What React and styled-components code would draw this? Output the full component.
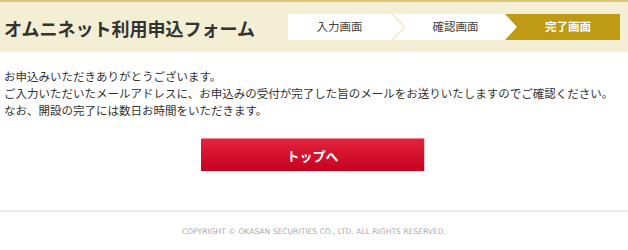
import React from "react";
import styled, { createGlobalStyle } from "styled-components";

const GlobalStyle = createGlobalStyle`
  html, body {
    margin: 0;
    padding: 0;
    background: #fff;
  }
  body {
    font-family: "Noto Sans CJK JP", "Noto Sans", sans-serif;
    color: #333;
  }
`;

const Page = styled.div`
  width: 628px;
  height: 250px;
  overflow: hidden;
  display: flex;
  flex-direction: column;
`;

const Header = styled.header`
  height: 50px;
  border-top: 2px solid #dcc677;
  background: #f4eed4;
  display: flex;
  align-items: center;
  padding: 0 8px 0 4px;
`;

const Title = styled.h1`
  margin: 0;
  font-size: 18px;
  font-weight: bold;
  letter-spacing: 0;
  color: #333;
  line-height: 1;
  padding-top: 1px;
`;

const Steps = styled.ol`
  margin: 0 0 0 auto;
  padding: 0;
  list-style: none;
  display: flex;
  width: 332px;
  height: 26px;
`;

const arrow = 12;

const Step = styled.li`
  height: 26px;
  display: flex;
  align-items: center;
  justify-content: center;
  font-size: 11.5px;
  line-height: 1;
  box-sizing: border-box;
  background: ${(p) => (p.$active ? "#bf9b15" : "#fff")};
  color: ${(p) => (p.$active ? "#fff" : "#444")};
  font-weight: ${(p) => (p.$active ? "bold" : "normal")};
  width: ${(p) => p.$w}px;
  margin-left: ${(p) => p.$ml || 0}px;
  padding-left: ${(p) => (p.$first ? 0 : arrow)}px;
  padding-right: ${(p) => (p.$last ? 0 : arrow)}px;
  clip-path: ${(p) =>
    p.$first
      ? `polygon(0 0, calc(100% - ${arrow}px) 0, 100% 50%, calc(100% - ${arrow}px) 100%, 0 100%)`
      : p.$last
      ? `polygon(0 0, 100% 0, 100% 100%, 0 100%, ${arrow}px 50%)`
      : `polygon(0 0, calc(100% - ${arrow}px) 0, 100% 50%, calc(100% - ${arrow}px) 100%, 0 100%, ${arrow}px 50%)`};
  z-index: ${(p) => (p.$last ? 0 : 1)};
`;

const Body = styled.main`
  padding: 16px 4px 0;
  font-size: 11.5px;
  line-height: 17px;
  color: #333;
`;

const Message = styled.p`
  margin: 0;
  white-space: nowrap;
`;

const ButtonRow = styled.div`
  display: flex;
  justify-content: center;
  margin-top: 19px;
  padding-right: 3px;
`;

const TopButton = styled.button`
  width: 223px;
  height: 33px;
  border: none;
  border-top: 1px solid #ec8a98;
  background: linear-gradient(#e2243e, #c6011f);
  color: #fff;
  font-family: "Noto Sans CJK JP", sans-serif;
  font-size: 13px;
  font-weight: bold;
  cursor: pointer;
  box-shadow: 1px 0 0 #f0c0c8;
`;

const Footer = styled.footer`
  margin-top: auto;
  height: 38px;
  border-top: 2px solid #ececec;
  display: flex;
  align-items: center;
  justify-content: center;
`;

const Copyright = styled.small`
  font-family: "DejaVu Sans", Verdana, sans-serif;
  font-size: 7.6px;
  color: #a8a8a8;
  letter-spacing: 0;
`;

export default function App() {
  return (
    <Page>
      <GlobalStyle />
      <Header>
        <Title>オムニネット利用申込フォーム</Title>
        <Steps>
          <Step $first $w={115}>入力画面</Step>
          <Step $w={123} $ml={-9}>確認画面</Step>
          <Step $last $active $w={116} $ml={-13}>完了画面</Step>
        </Steps>
      </Header>
      <Body>
        <Message>お申込みいただきありがとうございます。</Message>
        <Message>
          ご入力いただいたメールアドレスに、お申込みの受付が完了した旨のメールをお送りいたしますのでご確認ください。
        </Message>
        <Message>なお、開設の完了には数日お時間をいただきます。</Message>
        <ButtonRow>
          <TopButton type="button">トップへ</TopButton>
        </ButtonRow>
      </Body>
      <Footer>
        <Copyright>COPYRIGHT © OKASAN SECURITIES CO., LTD. ALL RIGHTS RESERVED.</Copyright>
      </Footer>
    </Page>
  );
}
